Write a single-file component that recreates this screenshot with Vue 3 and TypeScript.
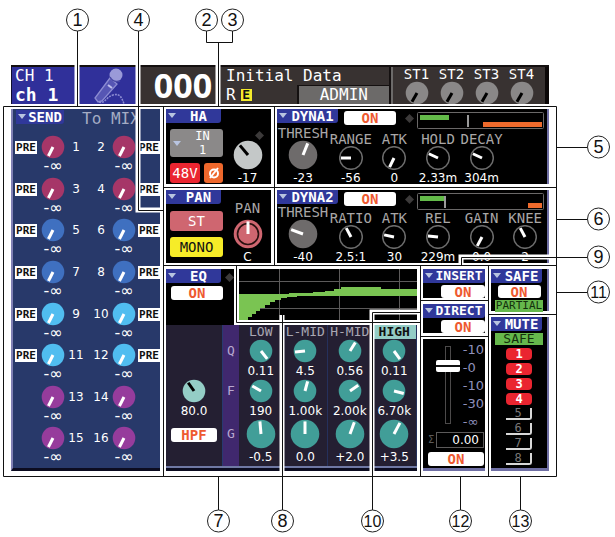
<script setup lang="ts">
import { h } from 'vue'

interface KnobProps {
  label: string
  size: number
  angle: number
  fill?: string
  ring?: string
  hand?: string
  reach?: number
}

const Knob = (p: KnobProps) => {
  const c = p.size / 2
  const rad = (p.angle * Math.PI) / 180
  const r = c * (p.reach ?? 0.84)
  return h('label', { class: 'knob' }, [
    h('svg', { width: p.size, height: p.size, viewBox: `0 0 ${p.size} ${p.size}` }, [
      h('circle', { cx: c, cy: c, r: c - 0.7, fill: p.fill ?? '#000', stroke: p.fill ? 'none' : '#6b6b6b', 'stroke-width': 1.5 }),
      p.ring ? h('circle', { cx: c, cy: c, r: c - 4.5, fill: 'none', stroke: p.ring, 'stroke-width': 1.6 }) : null,
      h('line', { x1: c, y1: c, x2: c + Math.sin(rad) * r, y2: c - Math.cos(rad) * r, stroke: p.hand ?? '#fff', 'stroke-width': 3 }),
    ]),
    h('input', { type: 'range', min: -150, max: 210, value: p.angle, 'aria-label': p.label }),
  ])
}
Knob.props = ['label', 'size', 'angle', 'fill', 'ring', 'hand', 'reach']

const Diamond = () =>
  h('svg', { class: 'diamond', width: 9, height: 9, viewBox: '0 0 9 9' }, [
    h('path', { d: 'M4.5 0L9 4.5L4.5 9L0 4.5Z', fill: '#3c3a3a' }),
  ])

const mixColors = ['#a63668', '#a63668', '#3f70c0', '#3f70c0', '#50bdf0', '#50bdf0', '#963c9c', '#963c9c']
const mixRows = mixColors.map((color, i) => ({ color, left: i * 2 + 1, right: i * 2 + 2, pre: i < 6 }))
const stereo = ['ST1', 'ST2', 'ST3', 'ST4']

interface Param { name: string; angle: number; value: string }
interface Dyna {
  title: string; thresh: string; threshAngle: number; params: Param[]
  green: number; tickX: number; tickEnd: number; orange: number
}
const dynas: Dyna[] = [
  {
    title: 'DYNA1', thresh: '-23', threshAngle: 22, green: 29, tickX: 50, tickEnd: 14, orange: 66,
    params: [
      { name: 'RANGE', angle: 270, value: '-56' },
      { name: 'ATK', angle: 206, value: '0' },
      { name: 'HOLD', angle: -65, value: '2.33m' },
      { name: 'DECAY', angle: -65, value: '304m' },
    ],
  },
  {
    title: 'DYNA2', thresh: '-40', threshAngle: -70, green: 26, tickX: 27, tickEnd: 14, orange: 111,
    params: [
      { name: 'RATIO', angle: -28, value: '2.5:1' },
      { name: 'ATK', angle: -78, value: '30' },
      { name: 'REL', angle: -84, value: '229m' },
      { name: 'GAIN', angle: 208, value: '0.0' },
      { name: 'KNEE', angle: -28, value: '2' },
    ],
  },
]

const bands = [
  { name: 'LOW', q: 142, qv: '0.11', f: -60, fv: '190', g: -5, gv: '-0.5' },
  { name: 'L-MID', q: 264, qv: '4.5', f: 15, fv: '1.00k', g: 0, gv: '0.0' },
  { name: 'H-MID', q: 32, qv: '0.56', f: 55, fv: '2.00k', g: 20, gv: '+2.0' },
  { name: 'HIGH', q: 144, qv: '0.11', f: 104, fv: '6.70k', g: 28, gv: '+3.5' },
]

const scale = ['-10', '-0', '-10', '-30', '-∞']
const teal = '#419e98'

const callouts = [
  { n: 1, x: 77, y: 20 }, { n: 4, x: 138, y: 20 }, { n: 2, x: 206, y: 20 }, { n: 3, x: 232, y: 20 },
  { n: 5, x: 598, y: 147 }, { n: 6, x: 598, y: 219 }, { n: 9, x: 598, y: 257 }, { n: 11, x: 598, y: 292 },
  { n: 7, x: 218, y: 521 }, { n: 8, x: 282, y: 521 }, { n: 10, x: 372, y: 521 }, { n: 12, x: 460, y: 521 }, { n: 13, x: 520, y: 521 },
]
</script>

<template>
  <main class="figure">
    <div class="console">
      <header class="top">
        <div class="channel">
          <div class="names">
            <span>CH 1</span>
            <strong>ch 1</strong>
          </div>
          <svg class="mic" width="36" height="38" viewBox="0 0 36 38">
            <path d="M17 11L2 31L5 35L9 34L24 17Z" fill="#5656b4" stroke="#8c8cd2" stroke-width="1.3" />
            <path d="M15 18L19 21" stroke="#c0c0ec" stroke-width="2" />
            <circle cx="23" cy="8" r="6.5" fill="#9a9ad8" />
            <path d="M17 10Q20 16 27 14" fill="none" stroke="#4848a4" stroke-width="1.5" />
            <path d="M6 35C12 37 13 30 20 28C27 26 29 31 31 37" fill="none" stroke="#8c8cd2" stroke-width="1.6" stroke-dasharray="2 1" />
          </svg>
        </div>
        <div class="scene">
          <span class="number">000</span>
          <div class="scene-info">
            <span class="scene-title">Initial Data</span>
            <div class="flags">
              <span>R</span><b class="edit">E</b>
              <button class="admin">ADMIN</button>
            </div>
          </div>
        </div>
        <div class="stereo">
          <div v-for="s in stereo" :key="s" class="st">
            <span>{{ s }}</span>
            <Knob :label="s" :size="24" :angle="210" fill="#8a8888" hand="#000" />
          </div>
        </div>
      </header>

      <div class="panels">
        <section class="mix">
          <div class="mix-head">
            <button class="tab send">SEND</button>
            <h2>To MIX</h2>
          </div>
          <div class="mix-rows">
            <div v-for="row in mixRows" :key="row.left" class="mix-row">
              <button v-if="row.pre" class="pre pre-left">PRE</button>
              <div class="mix-cell cell-left">
                <Knob :label="'MIX ' + row.left" :size="24" :angle="207" :fill="row.color" />
                <span class="inf">-∞</span>
              </div>
              <span class="no no-left">{{ row.left }}</span>
              <span class="no no-right">{{ row.right }}</span>
              <div class="mix-cell cell-right">
                <Knob :label="'MIX ' + row.right" :size="24" :angle="207" :fill="row.color" />
                <span class="inf">-∞</span>
              </div>
              <button v-if="row.pre" class="pre pre-right">PRE</button>
            </div>
          </div>
        </section>

        <section class="input">
          <div class="stack">
            <button class="tab">HA</button>
            <button class="source"><i class="arrow"></i><span>IN<br />1</span></button>
            <div class="pair">
              <button class="red">48V</button>
              <button class="phase" aria-label="Phase">
                <svg width="14" height="14" viewBox="0 0 14 14">
                  <circle cx="7" cy="7.5" r="4" fill="none" stroke="#fff" stroke-width="2" />
                  <path d="M3 12L11 2" stroke="#fff" stroke-width="2" />
                </svg>
              </button>
            </div>
          </div>
          <div class="dial">
            <Diamond />
            <Knob label="HA gain" :size="30" :angle="-40" fill="#c4c8c8" hand="#000" />
            <span class="value">-17</span>
          </div>
        </section>

        <section class="input">
          <div class="stack pan-stack">
            <button class="tab">PAN</button>
            <button class="st-button">ST</button>
            <button class="mono">MONO</button>
          </div>
          <div class="dial">
            <span class="caption pan-caption">PAN</span>
            <Knob label="Pan" :size="30" :angle="0" fill="#cf6670" ring="#2a1010" />
            <span class="value">C</span>
          </div>
        </section>

        <section v-for="(d, i) in dynas" :key="d.title" class="dyna" :class="'dyna-' + (i + 1)">
          <div class="dyna-head">
            <button class="tab">{{ d.title }}</button>
            <button class="on">ON</button>
            <Diamond />
            <svg class="meter" viewBox="0 0 127 17" preserveAspectRatio="none">
              <rect x="0.5" y="0.5" width="126" height="16" rx="1" fill="#000" stroke="#6a6868" />
              <rect x="3" y="3" :width="d.green" height="5" fill="#63ba49" />
              <rect :x="d.tickX" y="3" width="2" :height="d.tickEnd - 2" fill="#9a9a9a" />
              <rect :x="d.orange" y="10" :width="125 - d.orange" height="5" fill="#ee6a2c" />
            </svg>
          </div>
          <div class="dyna-body">
            <div class="thresh">
              <span class="caption">THRESH</span>
              <Knob :label="d.title + ' threshold'" :size="30" :angle="d.threshAngle" fill="#6e6b6b" />
              <span class="value">{{ d.thresh }}</span>
            </div>
            <div v-for="p in d.params" :key="p.name" class="param">
              <span class="caption">{{ p.name }}</span>
              <Knob :label="p.name" :size="24" :angle="p.angle" />
              <span class="value">{{ p.value }}</span>
            </div>
          </div>
        </section>

        <div class="lower">
          <section class="eq">
            <div class="eq-top">
              <div class="eq-switch">
                <div class="eq-tab"><button class="tab">EQ</button><Diamond /></div>
                <button class="on">ON</button>
              </div>
              <div class="graph">
                <svg viewBox="0 0 178 51" preserveAspectRatio="none">
                  <path d="M0 12.5H178M0 39.5H178M40.500 0V51M100.500 0V51M160.500 0V51" stroke="#5c5a5a" fill="none" />
                  <path
                    d="M0 25H50V24H74V23H86V22H95V20H102V18H142V20H178V27H58V28H48V29H42V31H36V33H31V36H26V39H21V42H17V45H13V48H9V51H0Z"
                    fill="#7ac452"
                  />
                </svg>
              </div>
            </div>
            <div class="eq-body">
              <div class="hpf">
                <Knob label="High pass frequency" :size="24" :angle="-35" fill="#94cdc6" hand="#000" />
                <span class="value">80.0</span>
                <button class="on">HPF</button>
              </div>
              <div class="letters"><span>Q</span><span>F</span><span class="big">G</span></div>
              <div v-for="b in bands" :key="b.name" class="band" :class="{ chosen: b.name === 'HIGH' }">
                <span class="band-name">{{ b.name }}</span>
                <Knob :label="b.name + ' Q'" :size="24" :angle="b.q" :fill="teal" />
                <span class="value">{{ b.qv }}</span>
                <Knob :label="b.name + ' F'" :size="24" :angle="b.f" :fill="teal" />
                <span class="value">{{ b.fv }}</span>
                <Knob :label="b.name + ' G'" :size="30" :angle="b.g" :fill="teal" />
                <span class="value">{{ b.gv }}</span>
              </div>
            </div>
          </section>

          <div class="column">
            <section class="route"><button class="tab wide">INSERT</button><button class="on">ON</button></section>
            <section class="route"><button class="tab wide">DIRECT</button><button class="on">ON</button></section>
            <section class="fader">
              <div class="fader-area">
                <input class="slider" type="range" min="0" max="100" value="79" aria-label="Fader level" />
                <div class="scale"><span v-for="(s, i) in scale" :key="i">{{ s }}</span></div>
              </div>
              <div class="level"><span>Σ</span><output>0.00</output></div>
              <button class="on">ON</button>
            </section>
          </div>

          <div class="column">
            <section class="safe">
              <button class="tab">SAFE</button>
              <button class="on">ON</button>
              <span class="green">PARTIAL</span>
            </section>
            <section class="mute">
              <button class="tab">MUTE</button>
              <span class="green">SAFE</span>
              <button v-for="n in 8" :key="n" class="group" :class="{ lit: n < 5 }">{{ n }}</button>
            </section>
          </div>
        </div>
      </div>
    </div>

    <svg class="callouts" viewBox="0 0 615 537" preserveAspectRatio="xMinYMin meet">
      <path
        class="halo"
        d="M77 60V106M138 60V210H166M218 60V108M461 268V257H549M282 315V472M372 472V312H420"
      />
      <path
        class="rule"
        d="M77.500 31V106M138.500 31V210.500H163M206.500 31V42.500H232.500V31M218.500 42V106
          M3.500 106.500H556.500V476.500H3.500ZM163.500 106V476M163 187.500H556M163 265.500H556M274.500 106V265
          M236.500 265V322.500H420M420.500 265V476M488.500 265V476M420 300.500H488M420 336.500H488M488 314.500H556
          M556 147.500H587M556 219.500H587M587 257.500H461.500V265M556 292.500H587
          M282.500 315V510M420 312.500H372.500V510M218.500 476V510M460.500 476V510M520.500 476V510"
      />
      <g v-for="c in callouts" :key="c.n">
        <circle :cx="c.x + 0.5" :cy="c.y" r="11" />
        <text :x="c.x + 0.5" :y="c.y + 6" :class="{ single: c.n < 10 }">{{ c.n }}</text>
      </g>
    </svg>
  </main>
</template>

<style>
body {
  margin: 0;
  background: #fff;
}
.knob {
  display: grid;
  flex: none;
}
.knob svg,
.knob input {
  grid-area: 1 / 1;
  display: block;
}
.knob input {
  width: 0;
  min-width: 100%;
  height: 100%;
  margin: 0;
  opacity: 0;
}
.diamond {
  flex: none;
  display: block;
}
</style>

<style scoped>
.figure {
  position: relative;
  box-sizing: border-box;
  padding: 65px 66px 67px 11px;
  font-family: 'DejaVu Sans Mono', 'Liberation Mono', monospace;
  color: #fff;
}
.callouts {
  position: absolute;
  left: 0;
  top: 0;
  width: 100%;
  height: 100%;
  pointer-events: none;
}
.halo {
  fill: none;
  stroke: #fff;
  stroke-width: 5;
}
.rule {
  fill: none;
  stroke: #111;
  stroke-width: 1;
}
.callouts circle {
  fill: #fff;
  stroke: #222;
  stroke-width: 1;
}
.callouts text {
  font: 16px 'Liberation Sans', Arial, sans-serif;
  text-anchor: middle;
  fill: #111;
}
.callouts .single {
  font-size: 18px;
}
button {
  display: block;
  box-sizing: border-box;
  margin: 0;
  padding: 0;
  border: 0;
  background: none;
  font: inherit;
  color: inherit;
  text-align: center;
  white-space: nowrap;
}

/* Header */
.top {
  display: grid;
  grid-template-columns: minmax(0, 129fr) minmax(0, 251fr) minmax(0, 158fr);
  height: 39px;
  overflow: hidden;
  background: #383231;
  box-sizing: border-box;
  border-top: 2px solid #141010;
}
.channel {
  display: flex;
  background: #30309a;
  border-left: 1px solid #101030;
}
.names {
  display: flex;
  flex-direction: column;
  width: 78px;
  padding-left: 3px;
  font-size: 16px;
  line-height: 18px;
}
.names strong {
  font-size: 18px;
  line-height: 19px;
}
.scene {
  display: flex;
  border-right: 2px solid #141010;
}
.number {
  width: 74px;
  font: 700 34px/36px 'Noto Sans', sans-serif;
  text-align: center;
  padding-left: 6px;
  margin-right: 6px;
}
.scene-info {
  flex: 1;
  font-size: 16px;
  line-height: 18px;
  white-space: nowrap;
}
.scene-title {
  display: block;
}
.flags {
  display: flex;
  gap: 5px;
  align-items: center;
  height: 19px;
}
.edit {
  width: 11px;
  font-size: 13px;
  line-height: 12px;
  text-align: center;
  background: #f3ea2c;
  color: #111;
}
.admin {
  flex: 1;
  height: 19px;
  margin-left: 40px;
  background: #6c6a69;
  border-top: 1px solid #141010;
  border-left: 2px solid #141010;
  line-height: 18px;
}
.stereo {
  display: grid;
  grid-template-columns: repeat(4, minmax(0, 1fr));
  padding: 0 6px 0 6px;
  border-left: 2px solid #6c6a69;
  border-right: 4px solid #0c0808;
}
.st {
  display: flex;
  flex-direction: column;
  align-items: center;
  font-size: 14px;
  line-height: 14px;
}

/* Panel grid */
.panels {
  display: grid;
  grid-template-columns: minmax(0, 149fr) minmax(0, 105fr) minmax(0, 272fr);
  grid-template-rows: 75px 73px auto;
  gap: 6px;
  margin-top: 5px;
}
section {
  background: #000;
  box-sizing: border-box;
  min-width: 0;
}
.tab {
  position: relative;
  width: 55px;
  height: 14px;
  padding-left: 10px;
  border-radius: 0 0 3px 0;
  background: #30389a;
  font-size: 14px;
  font-weight: 700;
  line-height: 14px;
}
.tab::before,
.arrow {
  content: '';
  position: absolute;
  left: 2px;
  top: 4px;
  border: 4px solid transparent;
  border-top: 5px solid #b8c4e0;
  border-bottom: 0;
}
.on {
  height: 14px;
  width: 52px;
  border-radius: 3px;
  background: #fff;
  color: #ee5a30;
  font-size: 14px;
  font-weight: 700;
  line-height: 14px;
}
.value {
  font: 12px/12px 'DejaVu Sans', sans-serif;
  margin-top: 2px;
  white-space: nowrap;
}
.caption {
  font-size: 14px;
  line-height: 14px;
  color: #a9a7a7;
}

/* Mix sends */
.mix {
  grid-row: 1 / 4;
  display: flex;
  flex-direction: column;
  background: #28396a;
  border-left: 2px solid #8080b4;
  border-bottom: 3px solid #0c0c20;
}
.mix-head {
  display: flex;
  align-items: center;
  height: 26px;
  gap: 18px;
  padding-left: 3px;
}
.send {
  width: 48px;
  align-self: flex-start;
  margin-top: 1px;
}
h2 {
  margin: 0;
  align-self: flex-start;
  font-size: 16px;
  font-weight: 400;
  line-height: 20px;
  color: #a4acc4;
}
.mix-rows {
  flex: 1;
  display: grid;
  grid-template-rows: repeat(8, minmax(0, 1fr));
}
.mix-row {
  display: grid;
  grid-template-columns: 24px 28px 18px minmax(0, 1fr) 18px 28px 22px;
  align-items: start;
  padding-left: 2px;
}
.mix-cell {
  display: flex;
  flex-direction: column;
  align-items: center;
}
.cell-left {
  grid-column: 2;
}
.no-left {
  grid-column: 3;
}
.no-right {
  grid-column: 5;
}
.cell-right {
  grid-column: 6;
}
.mix-row > * {
  grid-row: 1;
}
.pre-left {
  grid-column: 1;
}
.pre-right {
  grid-column: 7;
}
.pre {
  width: 22px;
  height: 13px;
  margin-top: 6px;
  background: #fff;
  color: #111;
  font-size: 11px;
  font-weight: 700;
  line-height: 13px;
}
.inf {
  font: 16px/14px 'DejaVu Sans', sans-serif;
}
.no {
  font: 12px/24px 'DejaVu Sans', sans-serif;
  text-align: center;
}

/* Head amp and pan */
.input {
  grid-column: 2;
  display: flex;
  justify-content: space-between;
}
.stack {
  display: flex;
  flex-direction: column;
  gap: 6px;
}
.stack > :not(.tab) {
  margin-left: 4px;
}
.source {
  position: relative;
  width: 53px;
  height: 28px;
  padding-left: 12px;
  border-radius: 3px;
  background: #8b8989;
  font-size: 12px;
  line-height: 14px;
}
.arrow {
  top: 12px;
  left: 3px;
}
.pair {
  display: flex;
  gap: 4px;
}
.pair button {
  height: 20px;
  border-radius: 3px;
  font-size: 14px;
}
.red {
  width: 30px;
  background: #ea2530;
}
.phase {
  display: grid;
  place-items: center;
  width: 19px;
  background: #ee682c;
}
.dial {
  display: flex;
  flex-direction: column;
  align-items: center;
  justify-content: flex-end;
  width: 47px;
}
.dial .diamond {
  align-self: flex-end;
  margin-right: 7px;
}
.pan-caption {
  margin-bottom: 4px;
}
.pan-stack button:not(.tab) {
  width: 53px;
  height: 20px;
  border-radius: 3px;
  font-size: 14px;
}
.st-button {
  margin-top: 1px;
  background: #cf6670;
}
.mono {
  background: #f6ec28;
  color: #111;
}

/* Dynamics */
.dyna {
  grid-column: 3;
  display: flex;
  flex-direction: column;
  border-right: 2px solid #6f6fa4;
}
.dyna-1 {
  grid-row: 1;
}
.input + .input,
.dyna-2 {
  grid-row: 2;
}
.dyna-head {
  display: flex;
  align-items: flex-start;
  height: 20px;
}
.dyna-head .tab {
  width: 61px;
}
.dyna-head .on {
  margin: 2px 9px 0 6px;
}
.dyna-head .diamond {
  margin: 5px 3px 0 0;
}
.meter {
  flex: 1;
  min-width: 0;
  height: 17px;
  margin: 3px 3px 0 0;
}
.dyna-body {
  flex: 1;
  min-height: 0;
  display: grid;
  grid-template-columns: 52px repeat(5, minmax(0, 1fr));
  align-content: end;
  align-items: end;
}
.thresh,
.param {
  display: flex;
  flex-direction: column;
  align-items: center;
}

/* Lower area */
.lower {
  grid-column: 2 / 4;
  grid-row: 3;
  display: grid;
  grid-template-columns: minmax(0, 251fr) minmax(0, 62fr) minmax(0, 58fr);
  gap: 6px;
}
.eq {
  display: flex;
  flex-direction: column;
  background: #241f32;
  border-bottom: 3px solid #0c0c20;
}
.eq-top {
  display: flex;
}
.eq-switch {
  width: 68px;
  background: #000;
}
.eq-tab {
  display: flex;
  align-items: center;
  gap: 4px;
}
.eq-tab .tab {
  margin-bottom: 3px;
}
.eq-switch .on {
  margin-left: 5px;
}
.graph {
  flex: 1;
  min-width: 0;
  border-left: 5px solid #fff;
  border-bottom: 5px solid #fff;
  background: #000;
}
.graph svg {
  display: block;
  width: 100%;
  height: 51px;
}
.eq-body {
  flex: 1;
  display: grid;
  grid-template-columns: 56px 17px repeat(4, minmax(0, 1fr));
  border-bottom: 2px solid #6f78a4;
}
.hpf,
.band {
  display: flex;
  flex-direction: column;
  align-items: center;
}
.hpf {
  padding-top: 54px;
}
.hpf .on {
  width: 46px;
  margin-top: 11px;
}
.letters {
  display: flex;
  flex-direction: column;
  gap: 16px;
  padding-top: 14px;
  background: #40286e;
  border-left: 1px solid #283a70;
  color: #b8a8d0;
  font-size: 13px;
  line-height: 24px;
  text-align: center;
}
.letters .big {
  line-height: 30px;
}
.band {
  border-right: 1px solid #25305c;
}
.band .value {
  margin-bottom: 2px;
}
.band-name {
  align-self: stretch;
  font-size: 13px;
  line-height: 14px;
  text-align: center;
  color: #a9a7b2;
}
.chosen .band-name {
  background: #94cdc6;
  color: #111;
  font-weight: 700;
}
.column {
  display: flex;
  flex-direction: column;
  gap: 6px;
}
.route {
  height: 29px;
  flex: none;
  display: flex;
  flex-direction: column;
  align-items: flex-end;
  gap: 2px;
}
.wide {
  width: 100%;
  font-size: 13px;
}
.route .on {
  width: 44px;
  height: 13px;
}
.fader {
  flex: 1;
  padding: 4px 1px 2px 5px;
  border-bottom: 3px solid #6f6fa4;
}
.fader-area {
  display: flex;
  justify-content: space-between;
  height: 86px;
}
.slider {
  appearance: none;
  writing-mode: vertical-lr;
  direction: rtl;
  width: 24px;
  height: 78px;
  margin: 3px 0 0 8px;
  background: none;
}
.slider::-webkit-slider-runnable-track {
  width: 6px;
  height: 100%;
  box-sizing: border-box;
  border: 1px solid #4c4a4a;
}
.slider::-webkit-slider-thumb {
  appearance: none;
  width: 24px;
  height: 12px;
  margin-left: -10px;
  border-radius: 2px;
  background: linear-gradient(#fff 5px, #111 5px, #111 7px, #fff 7px);
}
.scale {
  display: flex;
  flex-direction: column;
  justify-content: space-between;
  font: 13px/14px 'DejaVu Sans', sans-serif;
  color: #8f90bc;
}
.level {
  display: flex;
  align-items: center;
  gap: 2px;
  margin: 3px 0 4px;
  font: 12px/14px 'DejaVu Sans', sans-serif;
}
.level span {
  color: #5c5a5a;
  font-size: 10px;
}
.level output {
  flex: 1;
  padding-right: 4px;
  border: 1px solid #5c5a5a;
  text-align: right;
}
.fader .on {
  width: 100%;
}
.safe,
.mute {
  display: flex;
  flex-direction: column;
  align-items: center;
  border-right: 2px solid #6f6fa4;
}
.safe {
  height: 42px;
  gap: 2px;
}
.safe .tab,
.mute .tab {
  align-self: flex-start;
  width: 51px;
}
.safe .on {
  width: 43px;
  height: 13px;
}
.green {
  width: 48px;
  background: #66b84c;
  color: #14300c;
  font-size: 11px;
  line-height: 12px;
  text-align: center;
}
.mute {
  flex: 1;
  border-bottom: 3px solid #6f6fa4;
}
.mute .green {
  margin: 2px 0 3px;
  font-size: 13px;
}
.group {
  width: 26px;
  height: 12px;
  margin-bottom: 3px;
  border-right: 2px solid #d8d8d8;
  border-bottom: 2px solid #d8d8d8;
  border-radius: 0 0 3px 0;
  color: #7a7878;
  font-size: 12px;
  line-height: 11px;
}
.lit {
  border: 0;
  border-radius: 4px;
  background: #ea2530;
  color: #fff;
  font-weight: 700;
  line-height: 12px;
}
</style>
